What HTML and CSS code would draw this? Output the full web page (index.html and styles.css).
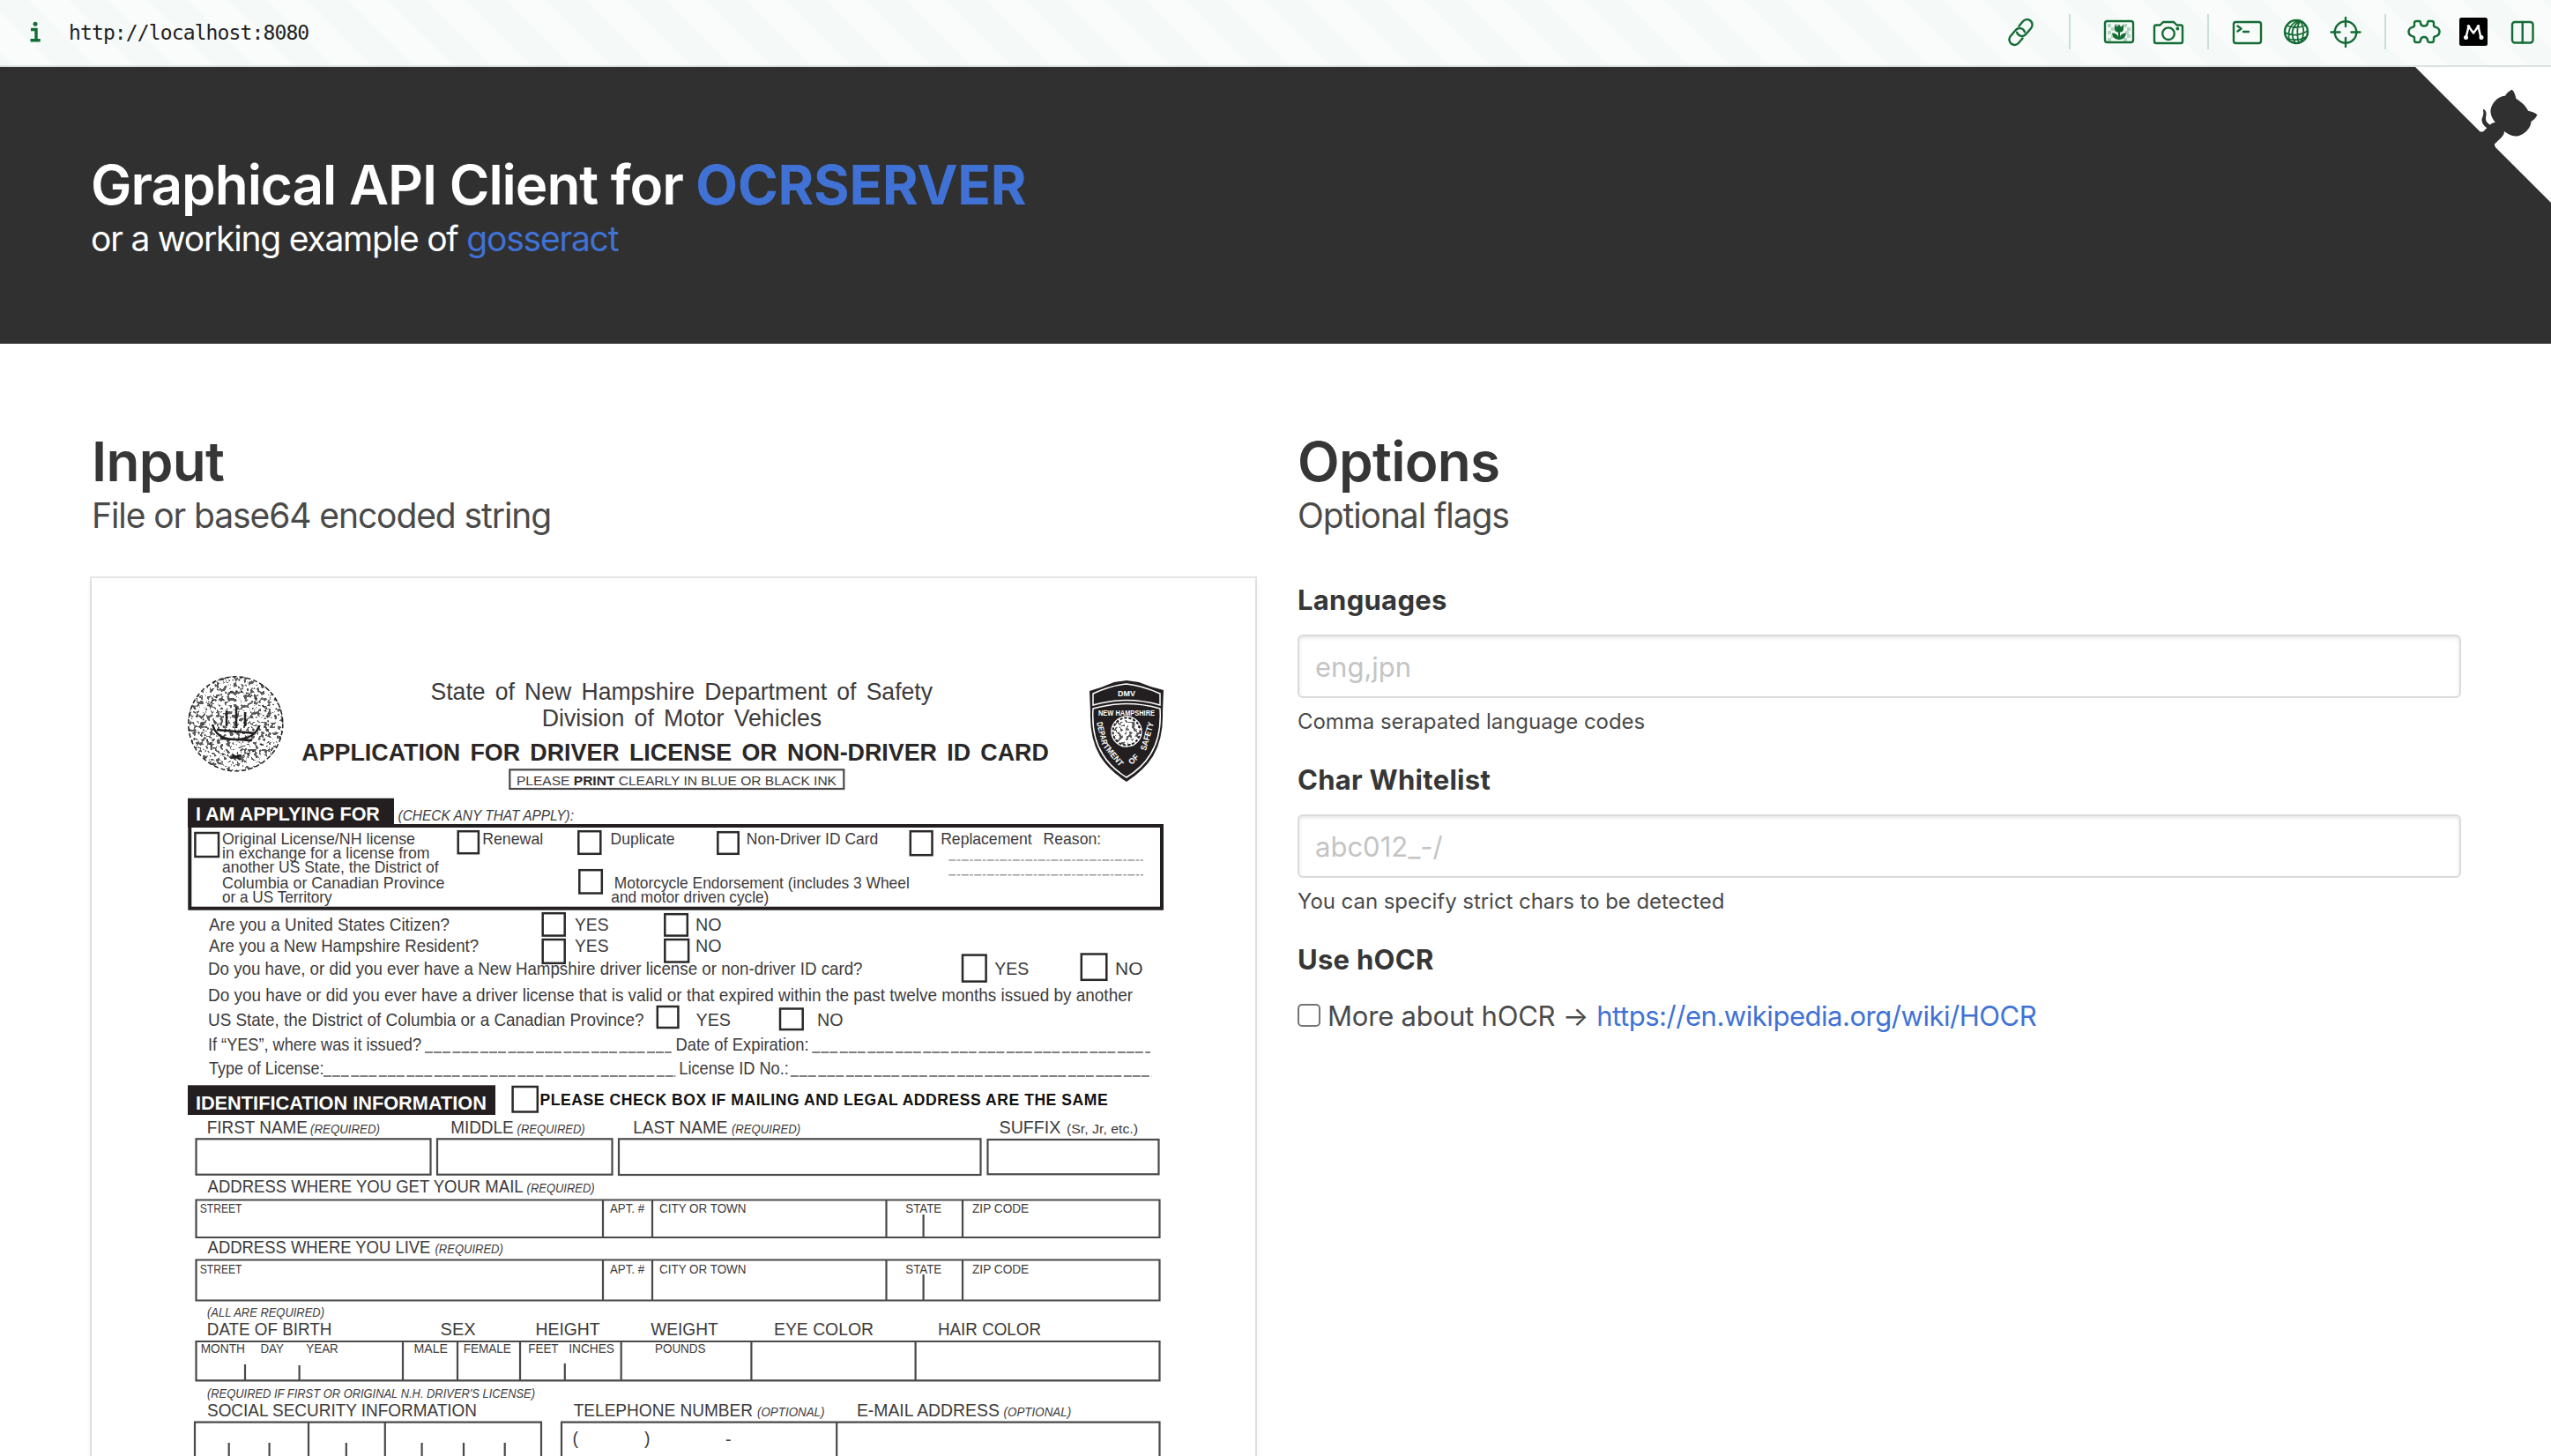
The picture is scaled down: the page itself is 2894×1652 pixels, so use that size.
FILE: index.html
```
<!DOCTYPE html>
<html lang="en">
<head>
<meta charset="utf-8">
<title>OCRSERVER</title>
<link rel="stylesheet" href="styles.css">
</head>
<body>
<div class="toolbar">
  <svg class="info" viewBox="0 0 14 24"><circle cx="7" cy="3.2" r="2.5"/><path d="M2 9.5H8V22M1.5 21.8H12.7"/></svg>
  <span class="url">http://localhost:8080</span>
  <div class="tools">
    <svg class="tool" viewBox="-28 -36 56 74"><g transform="translate(.5 .5) rotate(-50)"><path d="M-4 6H-11A6 6 0 0 1-11-6H-2A6 6 0 0 1 3 3.300"/><path d="M4-6H11A6 6 0 0 1 11 6H2A6 6 0 0 1-3-3.300"/></g></svg>
    <span class="rule wide"></span>
    <svg class="tool" viewBox="-28 -36 56 74"><path class="checks" d="M-13-9h4v4h-4zM-5-9h4v4h-4zM5-9h4v4h-4zM-9-5h4v4h-4zM9-5h4v4h-4zM-13-1h4v4h-4zM7-1h4v4h-4zM-9 3h4v4h-4zM9 3h4v4h-4zM-13 7h4v4h-4zM5 7h4v4h-4z"/><rect x="-16" y="-12" width="32" height="24" rx="2.500"/><path class="solid" d="M-5-8L-2-5.500 0-8.500 2-5.500 5-8V-3Q5 0 1 .8V6Q2 1.500 8 1.500 7 8.500 1 9H-1Q-7 8.500-8 1.500-2 1.500-1 6V.8Q-5 0-5-3Z"/></svg>
    <svg class="tool" viewBox="-28 -36 56 74"><path d="M-14-7.500H-9.500L-6-11H6L9.500-7.500H14A2 2 0 0 1 16-5.500V11A2 2 0 0 1 14 13H-14A2 2 0 0 1-16 11V-5.500A2 2 0 0 1-14-7.500Z"/><circle cx="0" cy="2.200" r="6.800"/><circle class="solid" cx="10.300" cy="-3.500" r="1.900"/></svg>
    <span class="rule"></span>
    <svg class="tool" viewBox="-28 -36 56 74"><rect x="-15" y="-11" width="31" height="24" rx="2.500"/><path d="M-10.500-6.500L-6.500-3.500-10.500-.5M-4 0H2"/></svg>
    <svg class="tool" viewBox="-28 -36 56 74"><circle r="13"/><path class="thin" d="M4-12.500Q-10-2-1 13M4-12.500Q12-2 5 12M4-12.500Q-1-2 3 13M3-13Q-11-8-8 10M-11-7Q0-3 11-7M-13 1Q0 7 13-1M-10 8Q2 11 11 6"/></svg>
    <svg class="tool" viewBox="-28 -36 56 74"><circle cy=".5" r="12.300"/><path d="M0-16V-6M0 7V17M-16.500.5H-6.500M6.500.5H16.500"/></svg>
    <span class="rule"></span>
    <svg class="tool" viewBox="-28 -36 56 74"><path d="M-9-12H-5Q-4-12-4-9.500 -3.500-6.500 0-6.500T4-9.500Q4-12 5-12H9Q11-12 11-9.500V-6.500Q12-5 14-5 17.500-3.500 17.500 0T14 5Q12 5 11 6.500V9.500Q11 12 9 12H6Q4 12 4 9.500 3.500 6 0 6T-4 9.500Q-4 12-6 12H-9Q-11 12-11 9.500V6.500Q-12 5-14 5-17.500 3.500-17.500 0T-14-5Q-12-5-11-6.500V-9.500Q-11-12-9-12Z"/></svg>
    <svg class="tool" viewBox="-28 -36 56 74"><rect class="black" x="-16" y="-16" width="32" height="32" rx="2.500"/><g class="mark"><path d="M-8.500 7L-5.500-6 0 1.500 5.500-6 8.500 7"/><circle cx="-8.500" cy="6.500" r="1.300"/><circle cx="9" cy="6.500" r="1.300"/><circle cx="-5.500" cy="-6" r=".7"/><circle cx="5.500" cy="-6" r=".7"/></g></svg>
    <svg class="tool" viewBox="-28 -36 56 74"><rect x="-12" y="-11" width="23.500" height="23.500" rx="3"/><path d="M-.3-11V12.500"/></svg>
  </div>
</div>

<header class="hero">
  <h1 class="title">Graphical API Client for <a class="name">OCRSERVER</a></h1>
  <p class="subtitle">or a working example of <a>gosseract</a></p>
  <svg class="corner" viewBox="0 0 250 250"><path class="fold" d="M0 0L115 115H130L142 142 250 250V0Z"/><path d="M128.300 109C113.800 99.700 119 89.600 119 89.600 122 82.700 120.500 78.600 120.500 78.600 119.200 72 123.400 76.300 123.400 76.300 127.300 80.900 125.500 87.300 125.500 87.300 122.900 97.600 130.600 101.900 134.400 103.200"/><path d="M115 115C114.900 115.100 118.700 116.500 119.800 115.400L133.700 101.600C136.900 99.200 139.900 98.400 142.200 98.600 133.800 88 127.500 74.400 143.800 58 148.500 53.400 154 51.200 159.700 51 160.300 49.400 163.200 43.600 171.400 40.100 171.400 40.100 176.100 42.500 178.800 56.200 183.100 58.600 187.200 61.800 190.900 65.400 194.500 69 197.700 73.200 200.100 77.600 213.800 80.200 216.300 84.900 216.300 84.900 212.700 93.100 206.900 96 205.400 96.600 205.100 102.400 203 107.800 198.300 112.500 181.900 128.900 168.300 122.500 157.700 114.100 157.900 116.900 156.700 120.900 152.700 124.900L141 136.500C139.800 137.700 141.600 141.900 141.800 141.800Z"/></svg>
</header>

<main class="columns">
  <section class="column">
    <h2 class="title">Input</h2>
    <p class="subtitle">File or base64 encoded string</p>
    <div class="card">
      <svg class="scan" viewBox="104 656 1320 1000">
        <defs>
          <filter id="engrave" x="0" y="0" width="1" height="1">
            <feTurbulence type="fractalNoise" baseFrequency=".26" numOctaves="2" seed="7"/>
            <feColorMatrix values="0 0 0 0 .1  0 0 0 0 .1  0 0 0 0 .1  16 0 0 0 -8.500"/>
            <feComposite in2="SourceGraphic" operator="in"/>
          </filter>
        </defs>

        <g class="seal">
          <circle class="noise" cx="267.300" cy="821.300" r="54"/>
          <circle cx="267.300" cy="821.300" r="53.500" stroke-dasharray="5 3"/>
          <circle cx="267.300" cy="821.300" r="37" stroke-dasharray="2 4"/>
          <path d="M241 822Q246 840 268 839T294 823M246 828L290 832M257 824V806M268 826V802M278 824V808M250 838L286 840M262 860L274 857M263 856L273 862" stroke-width="2.500"/>
        </g>

        <g class="shield">
          <path class="ink" d="M1278 772L1292 774Q1306 780 1320 783L1319 808Q1320 838 1308 858 1298 874 1278 887 1258 874 1248 858 1236 838 1237 808L1236 784Q1250 780 1264 774Z"/>
          <path d="M1278 776Q1260 778 1240 787V800Q1278 789 1316 800V787Q1296 778 1278 776Z"/>
          <path d="M1240 804Q1278 793 1316 804 1318 836 1305 856 1296 871 1278 882 1260 871 1251 856 1238 836 1240 804Z"/>
          <circle class="disc" cx="1278" cy="830" r="17"/>
          <circle class="noise" cx="1278" cy="830" r="16"/>
          <circle class="ring" cx="1278" cy="830" r="15.500"/>
          <text x="1268" y="790" textLength="20" lengthAdjust="spacingAndGlyphs">DMV</text>
          <text x="1246" y="812" textLength="64" lengthAdjust="spacingAndGlyphs">NEW HAMPSHIRE</text>
          <text transform="translate(1244 820) rotate(76)" textLength="26" lengthAdjust="spacingAndGlyphs">DEPAR</text>
          <text transform="translate(1251 847) rotate(50)" textLength="30" lengthAdjust="spacingAndGlyphs">TMENT</text>
          <text transform="translate(1284 868) rotate(-45)" textLength="12" lengthAdjust="spacingAndGlyphs">OF</text>
          <text transform="translate(1300 852) rotate(-74)" textLength="33" lengthAdjust="spacingAndGlyphs">SAFETY</text>
        </g>

        <g class="t28">
          <text x="488.500" y="794.300" textLength="569.500" lengthAdjust="spacingAndGlyphs">State of New Hampshire Department of Safety</text>
          <text x="614.700" y="824" textLength="317.500" lengthAdjust="spacingAndGlyphs">Division of Motor Vehicles</text>
          <text class="bold" x="342.300" y="862.700" textLength="847.500" lengthAdjust="spacingAndGlyphs">APPLICATION FOR DRIVER LICENSE OR NON-DRIVER ID CARD</text>
        </g>
        <rect class="line" x="578.300" y="873.300" width="379" height="21.700"/>
        <text class="t15" x="586" y="890.700" textLength="363" lengthAdjust="spacingAndGlyphs">PLEASE <tspan class="bold">PRINT</tspan> CLEARLY IN BLUE OR BLACK INK</text>

        <rect class="ink" x="213" y="905.700" width="234" height="33"/>
        <text class="banner" x="221.900" y="930.700" textLength="209" lengthAdjust="spacingAndGlyphs">I AM APPLYING FOR</text>
        <text class="t16 italic" x="451.500" y="931" textLength="199.500" lengthAdjust="spacingAndGlyphs">(CHECK ANY THAT APPLY):</text>
        <rect class="frame" x="215.300" y="937" width="1102.700" height="93.700"/>

        <g class="box">
          <rect x="221.400" y="945" width="26.600" height="27"/>
          <rect x="519.700" y="943.200" width="23.200" height="25"/>
          <rect x="656.300" y="943.200" width="25" height="25.600"/>
          <rect x="657.300" y="987.200" width="25.500" height="26.300"/>
          <rect x="814.300" y="944.200" width="23.400" height="24.600"/>
          <rect x="1032.800" y="943.200" width="24.700" height="27"/>
          <rect x="615.700" y="1036.200" width="25" height="25.400"/>
          <rect x="615.700" y="1066" width="25" height="26.800"/>
          <rect x="754.300" y="1037.200" width="25.500" height="24.400"/>
          <rect x="754.300" y="1066" width="26.800" height="25.500"/>
          <rect x="1092" y="1083.600" width="26.600" height="30"/>
          <rect x="1226.800" y="1082.500" width="28.500" height="29.300"/>
          <rect x="745.800" y="1142" width="23.600" height="24"/>
          <rect x="885" y="1144.500" width="25.700" height="23.600"/>
          <rect x="581.600" y="1233" width="28.200" height="28.500"/>
        </g>

        <g class="t18">
          <text x="252" y="957.700" textLength="219" lengthAdjust="spacingAndGlyphs">Original License/NH license</text>
          <text x="252" y="974" textLength="235.500" lengthAdjust="spacingAndGlyphs">in exchange for a license from</text>
          <text x="252" y="990" textLength="245.500" lengthAdjust="spacingAndGlyphs">another US State, the District of</text>
          <text x="252" y="1007.700" textLength="252.400" lengthAdjust="spacingAndGlyphs">Columbia or Canadian Province</text>
          <text x="252" y="1024" textLength="124.600" lengthAdjust="spacingAndGlyphs">or a US Territory</text>
          <text x="547.200" y="957.700" textLength="69" lengthAdjust="spacingAndGlyphs">Renewal</text>
          <text x="692.600" y="957.700" textLength="73" lengthAdjust="spacingAndGlyphs">Duplicate</text>
          <text x="696.800" y="1007.700" textLength="335" lengthAdjust="spacingAndGlyphs">Motorcycle Endorsement (includes 3 Wheel</text>
          <text x="693.300" y="1024" textLength="179" lengthAdjust="spacingAndGlyphs">and motor driven cycle)</text>
          <text x="846.800" y="957.700" textLength="149.500" lengthAdjust="spacingAndGlyphs">Non-Driver ID Card</text>
          <text x="1067.200" y="957.700" textLength="103.500" lengthAdjust="spacingAndGlyphs">Replacement</text>
          <text x="1183.600" y="957.700" textLength="65.500" lengthAdjust="spacingAndGlyphs">Reason:</text>
        </g>
        <path class="blank" stroke-dasharray="8 1.500 3.500 1.500" d="M1076.300 976H1297M1076.300 992.700H1297"/>

        <g class="t20">
          <text x="237" y="1056" textLength="273" lengthAdjust="spacingAndGlyphs">Are you a United States Citizen?</text>
          <text x="652" y="1056" textLength="38.500" lengthAdjust="spacingAndGlyphs">YES</text>
          <text x="789" y="1056" textLength="29.500" lengthAdjust="spacingAndGlyphs">NO</text>
          <text x="237" y="1079.500" textLength="306" lengthAdjust="spacingAndGlyphs">Are you a New Hampshire Resident?</text>
          <text x="652" y="1079.500" textLength="38.500" lengthAdjust="spacingAndGlyphs">YES</text>
          <text x="789" y="1079.500" textLength="29.500" lengthAdjust="spacingAndGlyphs">NO</text>
          <text x="236" y="1106.300" textLength="742.500" lengthAdjust="spacingAndGlyphs">Do you have, or did you ever have a New Hampshire driver license or non-driver ID card?</text>
          <text x="1128.300" y="1106.300" textLength="39" lengthAdjust="spacingAndGlyphs">YES</text>
          <text x="1265" y="1106.300" textLength="31.500" lengthAdjust="spacingAndGlyphs">NO</text>
          <text x="236" y="1136" textLength="1049" lengthAdjust="spacingAndGlyphs">Do you have or did you ever have a driver license that is valid or that expired within the past twelve months issued by another</text>
          <text x="236" y="1164" textLength="494.500" lengthAdjust="spacingAndGlyphs">US State, the District of Columbia or a Canadian Province?</text>
          <text x="789.500" y="1164" textLength="39.500" lengthAdjust="spacingAndGlyphs">YES</text>
          <text x="927" y="1164" textLength="29.500" lengthAdjust="spacingAndGlyphs">NO</text>
          <text x="236" y="1192" textLength="242" lengthAdjust="spacingAndGlyphs">If “YES”, where was it issued?</text>
          <text x="766.500" y="1192" textLength="151" lengthAdjust="spacingAndGlyphs">Date of Expiration:</text>
          <text x="237" y="1219" textLength="130.500" lengthAdjust="spacingAndGlyphs">Type of License:</text>
          <text x="770.300" y="1219" textLength="124.500" lengthAdjust="spacingAndGlyphs">License ID No.:</text>
        </g>
        <path class="blank dark" stroke-dasharray="9 1 9 1 9 2.500" d="M482 1194H761.800M921.300 1194H1305M366.800 1221H766.300M896.800 1221H1306.600"/>

        <rect class="ink" x="213" y="1231.300" width="349" height="33.700"/>
        <text class="banner" x="221.900" y="1258.700" textLength="330" lengthAdjust="spacingAndGlyphs">IDENTIFICATION INFORMATION</text>
        <text class="t17 bold" x="612.600" y="1254.300" textLength="644">PLEASE CHECK BOX IF MAILING AND LEGAL ADDRESS ARE THE SAME</text>

        <g class="t19">
          <text x="234.800" y="1285.700" textLength="114" lengthAdjust="spacingAndGlyphs">FIRST NAME</text>
          <text x="511.200" y="1285.700" textLength="71.500" lengthAdjust="spacingAndGlyphs">MIDDLE</text>
          <text x="718.300" y="1285.700" textLength="107" lengthAdjust="spacingAndGlyphs">LAST NAME</text>
          <text x="1133.600" y="1285.700" textLength="69.800" lengthAdjust="spacingAndGlyphs">SUFFIX</text>
          <text x="235.600" y="1352.500" textLength="358" lengthAdjust="spacingAndGlyphs">ADDRESS WHERE YOU GET YOUR MAIL</text>
          <text x="235.600" y="1422" textLength="252.800" lengthAdjust="spacingAndGlyphs">ADDRESS WHERE YOU LIVE</text>
          <text x="234.800" y="1515.300" textLength="141.500" lengthAdjust="spacingAndGlyphs">DATE OF BIRTH</text>
          <text x="499.600" y="1515.300" textLength="40" lengthAdjust="spacingAndGlyphs">SEX</text>
          <text x="607.500" y="1515.300" textLength="73.200" lengthAdjust="spacingAndGlyphs">HEIGHT</text>
          <text x="738.200" y="1515.300" textLength="76.500" lengthAdjust="spacingAndGlyphs">WEIGHT</text>
          <text x="878" y="1515.300" textLength="113" lengthAdjust="spacingAndGlyphs">EYE COLOR</text>
          <text x="1064" y="1515.300" textLength="117" lengthAdjust="spacingAndGlyphs">HAIR COLOR</text>
          <text x="235" y="1607.300" textLength="306" lengthAdjust="spacingAndGlyphs">SOCIAL SECURITY INFORMATION</text>
          <text x="650.700" y="1607.300" textLength="203.300" lengthAdjust="spacingAndGlyphs">TELEPHONE NUMBER</text>
          <text x="971.900" y="1607.300" textLength="162" lengthAdjust="spacingAndGlyphs">E-MAIL ADDRESS</text>
          <text x="649.500" y="1639">(</text>
          <text x="731" y="1639">)</text>
          <text x="823" y="1640">-</text>
        </g>

        <g class="t15">
          <text x="1210" y="1285.700" textLength="81" lengthAdjust="spacingAndGlyphs">(Sr, Jr, etc.)</text>
          <g class="italic">
            <text x="352" y="1285.700" textLength="79" lengthAdjust="spacingAndGlyphs">(REQUIRED)</text>
            <text x="586.600" y="1285.700" textLength="77" lengthAdjust="spacingAndGlyphs">(REQUIRED)</text>
            <text x="830" y="1285.700" textLength="78" lengthAdjust="spacingAndGlyphs">(REQUIRED)</text>
            <text x="597.600" y="1352.500" textLength="77" lengthAdjust="spacingAndGlyphs">(REQUIRED)</text>
            <text x="493.500" y="1422" textLength="77.300" lengthAdjust="spacingAndGlyphs">(REQUIRED)</text>
            <text x="235" y="1493.500" textLength="133" lengthAdjust="spacingAndGlyphs">(ALL ARE REQUIRED)</text>
            <text x="235" y="1585.500" textLength="372" lengthAdjust="spacingAndGlyphs">(REQUIRED IF FIRST OR ORIGINAL N.H. DRIVER'S LICENSE)</text>
            <text x="859" y="1607.300" textLength="76.500" lengthAdjust="spacingAndGlyphs">(OPTIONAL)</text>
            <text x="1138.600" y="1607.300" textLength="76.500" lengthAdjust="spacingAndGlyphs">(OPTIONAL)</text>
          </g>
        </g>

        <g class="t14">
          <text x="226.800" y="1376" textLength="47.700" lengthAdjust="spacingAndGlyphs">STREET</text>
          <text x="692" y="1376" textLength="39" lengthAdjust="spacingAndGlyphs">APT. #</text>
          <text x="748" y="1376" textLength="98.500" lengthAdjust="spacingAndGlyphs">CITY OR TOWN</text>
          <text x="1027.300" y="1376" textLength="40.800" lengthAdjust="spacingAndGlyphs">STATE</text>
          <text x="1103" y="1376" textLength="64.200" lengthAdjust="spacingAndGlyphs">ZIP CODE</text>
          <text x="226.800" y="1444.700" textLength="47.700" lengthAdjust="spacingAndGlyphs">STREET</text>
          <text x="692" y="1444.700" textLength="39" lengthAdjust="spacingAndGlyphs">APT. #</text>
          <text x="748" y="1444.700" textLength="98.500" lengthAdjust="spacingAndGlyphs">CITY OR TOWN</text>
          <text x="1027.300" y="1444.700" textLength="40.800" lengthAdjust="spacingAndGlyphs">STATE</text>
          <text x="1103" y="1444.700" textLength="64.200" lengthAdjust="spacingAndGlyphs">ZIP CODE</text>
          <text x="227.700" y="1534.700" textLength="50.200" lengthAdjust="spacingAndGlyphs">MONTH</text>
          <text x="295.400" y="1534.700" textLength="26.500" lengthAdjust="spacingAndGlyphs">DAY</text>
          <text x="347.300" y="1534.700" textLength="36.500" lengthAdjust="spacingAndGlyphs">YEAR</text>
          <text x="469.500" y="1534.700" textLength="38.500" lengthAdjust="spacingAndGlyphs">MALE</text>
          <text x="525.800" y="1534.700" textLength="54" lengthAdjust="spacingAndGlyphs">FEMALE</text>
          <text x="599.300" y="1534.700" textLength="34.200" lengthAdjust="spacingAndGlyphs">FEET</text>
          <text x="645.300" y="1534.700" textLength="51.700" lengthAdjust="spacingAndGlyphs">INCHES</text>
          <text x="743" y="1534.700" textLength="57.500" lengthAdjust="spacingAndGlyphs">POUNDS</text>
        </g>

        <g class="line">
          <rect x="222.500" y="1292.300" width="266" height="40.400"/>
          <rect x="496" y="1292.300" width="198.500" height="40.400"/>
          <rect x="702" y="1292.300" width="410.500" height="40.700"/>
          <rect x="1120.500" y="1293" width="194" height="39.300"/>
          <path d="M222.500 1361.500H1315.500V1404H222.500ZM684 1361V1404M740 1361V1404M1005.500 1361V1404M1092 1361V1404M1047.600 1378V1404"/>
          <path d="M222.500 1429.500H1315.500V1475.500H222.500ZM684 1429V1475M740 1429V1475M1005.500 1429V1475M1092 1429V1475M1047.600 1446V1475"/>
          <path d="M222.500 1522H1315.500V1566.300H222.500ZM457 1522V1566M519 1522V1566M590 1522V1566M704.700 1522V1566M852.400 1522V1566M1038.600 1522V1566M278 1548V1566M339.600 1549V1566M640.800 1547V1566"/>
          <path d="M221 1656V1613.700H614V1656M350 1614V1656M436.800 1614V1656M259.700 1637V1656M305.600 1637V1656M392.800 1637V1656M478.600 1637V1656M526 1637V1656M572.700 1637V1656M637 1656V1613.700H1315.500V1656M949.200 1614V1656"/>
        </g>
      </svg>
    </div>
  </section>

  <section class="column">
    <h2 class="title">Options</h2>
    <p class="subtitle">Optional flags</p>
    <div class="fields">
      <div class="field">
        <label class="label">Languages</label>
        <input class="input" type="text" placeholder="eng,jpn">
        <p class="help">Comma serapated language codes</p>
      </div>
      <div class="field">
        <label class="label">Char Whitelist</label>
        <input class="input" type="text" placeholder="abc012_-/">
        <p class="help">You can specify strict chars to be detected</p>
      </div>
      <div class="field">
        <label class="label">Use hOCR</label>
        <div class="check"><span class="tick"></span><span class="more">More about hOCR →</span><a class="wiki">https://en.wikipedia.org/wiki/HOCR</a></div>
      </div>
    </div>
  </section>
</main>
</body>
</html>
```
FILE: styles.css
```
* { box-sizing: border-box; }
body {
  margin: 0;
  height: 1652px;
  overflow: hidden;
  display: flex;
  flex-direction: column;
  background: #fff;
  color: #4a4a4a;
  font-family: Inter, "Liberation Sans", sans-serif;
}
a { color: #4072d6; }

/* Browser bar */
.toolbar {
  flex: none;
  height: 76px;
  display: flex;
  align-items: center;
  padding: 0 4px 0 33px;
  border-bottom: 2px solid #dde2e0;
  background: repeating-linear-gradient(45deg, #f5faf9 0 11px, #fafcfb 11px 43px, #f5faf9 43px 64px);
}
.info { width: 14px; height: 24px; fill: #146c35; margin-bottom: 3px; }
.info path { fill: none; stroke: #146c35; stroke-width: 3.4; }
.url {
  margin-left: 31px;
  padding-bottom: 1px;
  color: #222;
  font: 23px "DejaVu Sans Mono", monospace;
  letter-spacing: -0.88px;
}
.tools { display: flex; align-items: center; margin-left: auto; }
.tool {
  width: 56px;
  height: 74px;
  fill: none;
  stroke: #146c35;
  stroke-width: 2.4;
  stroke-linecap: round;
  stroke-linejoin: round;
}
.tool .solid { fill: #146c35; stroke: none; }
.tool .checks { fill: #b4d4c1; stroke: none; }
.tool .thin { stroke-width: 1.8; }
.tool .black { fill: #000; stroke: none; }
.tool .mark { stroke: #fff; fill: #fff; }
.mark path { fill: none; }
.rule { display: flex; justify-content: center; width: 33px; height: 40px; margin-bottom: 2px; }
.rule.wide { width: 56px; }
.rule::before { content: ""; width: 2px; background: #c8e0d4; }

/* Page header */
.hero {
  flex: none;
  position: relative;
  height: 314px;
  padding: 98px 103px 0;
  overflow: hidden;
  background: #303030;
  color: #fff;
}
.corner {
  position: absolute;
  top: 0;
  right: -6px;
  width: 160px;
  height: 160px;
  fill: #303030;
}
.corner .fold { fill: #fff; }

.title {
  margin: 0;
  color: #363636;
  font-size: 62px;
  font-weight: 600;
  line-height: 72px;
  letter-spacing: -0.7px;
}
.hero .title { letter-spacing: -1.02px; }
.hero .name { font-weight: 700; letter-spacing: -0.2px; }
.subtitle {
  margin: 0;
  font-size: 39px;
  line-height: 50px;
  letter-spacing: -1.08px;
}
.hero .subtitle { letter-spacing: -1.22px; }
.hero .title, .hero .subtitle { color: #fff; }

/* Two columns */
.columns {
  flex: 1;
  display: grid;
  grid-template-columns: 1fr 1fr;
  gap: 48px;
  padding: 98px 102px 0 104px;
}
.card {
  height: 1000px;
  margin-top: 46px;
  background: #fff;
  box-shadow: 0 4px 6px rgba(10, 10, 10, 0.1), 0 0 0 2px rgba(10, 10, 10, 0.1);
}

/* Scanned form */
.scan {
  display: block;
  width: 1320px;
  height: 1000px;
  fill: #3d3b3c;
  font-family: "Liberation Sans", Arial, sans-serif;
}
.ink { fill: #231f20; }
.bold { font-weight: 700; fill: #2a2728; }
.italic { font-style: italic; }
.t28 { font-size: 28px; word-spacing: 4px; }
.t20 { font-size: 19.8px; }
.t19 { font-size: 19.5px; }
.t18 { font-size: 18.5px; }
.t17 { font-size: 17.5px; fill: #111; }
.t16 { font-size: 16.5px; }
.t15 { font-size: 15.5px; }
.t14 { font-size: 14.3px; }
.banner { font-size: 21.5px; font-weight: 700; fill: #fff; }
.box { fill: #fff; stroke: #2b2829; stroke-width: 2.5; }
.line { fill: none; stroke: #4a4849; stroke-width: 2.2; }
.frame { fill: none; stroke: #231f20; stroke-width: 4; }
.blank { fill: none; stroke: #999; stroke-width: 1.4; }
.blank.dark { stroke: #555; }
.seal { fill: none; stroke: #231f20; stroke-width: 1.5; }
.seal .noise, .shield .noise { fill: #fff; stroke: none; filter: url(#engrave); }
.shield { fill: none; stroke: #fff; stroke-width: 1.5; }
.shield .ink { fill: #231f20; stroke: none; }
.shield .disc { fill: #fff; }
.shield .ring { stroke: #231f20; stroke-width: 2; stroke-dasharray: 3 2; }
.shield text { fill: #fff; stroke: none; font-size: 9.5px; font-weight: 700; }

/* Options form */
.fields { display: flex; flex-direction: column; gap: 24px; margin-top: 47px; }
.field { display: flex; flex-direction: column; }
.label {
  margin-bottom: 15px;
  color: #363636;
  font-size: 31px;
  font-weight: 700;
  line-height: 48px;
  letter-spacing: 0.28px;
}
.input {
  height: 72px;
  padding: 0 18px;
  border: 2px solid #dbdbdb;
  border-radius: 6px;
  background: #fff;
  box-shadow: inset 0 2px 4px rgba(10, 10, 10, 0.1);
  font: 31px Inter, sans-serif;
}
.input::placeholder { color: #c4c4c4; opacity: 1; }
.help { margin: 9px 0 0; font-size: 24px; line-height: 36px; letter-spacing: -0.05px; }
.check { display: flex; align-items: center; padding-top: 1px; font-size: 31px; line-height: 48px; }
.tick { width: 26px; height: 26px; border: 2px solid #767676; border-radius: 5px; margin-bottom: 3px; }
.more { margin-left: 8px; letter-spacing: -0.2px; }
.wiki { margin-left: 9px; letter-spacing: -0.47px; }
```
